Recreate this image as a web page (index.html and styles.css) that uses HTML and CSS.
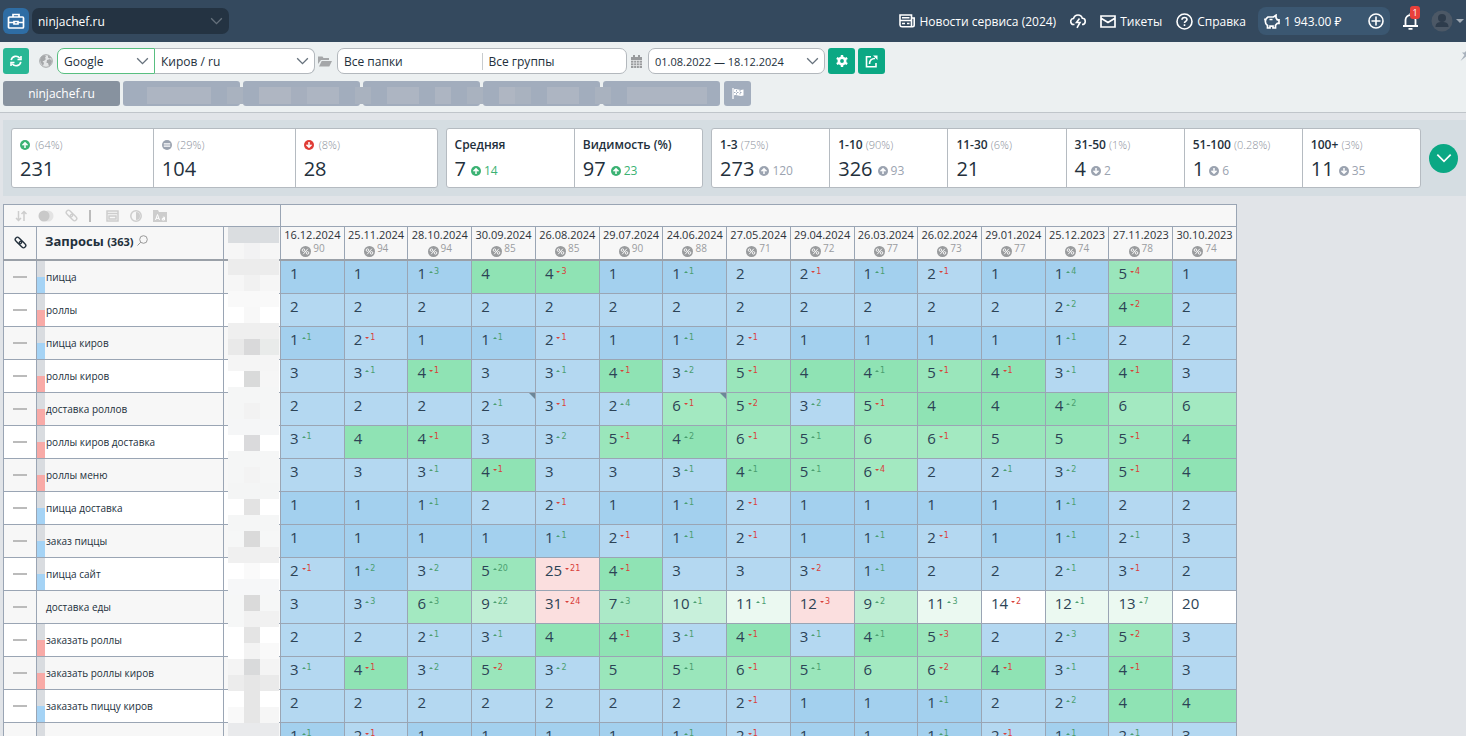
FILE: index.html
```
<!DOCTYPE html>
<html lang="ru">
  <head>
    <meta charset="UTF-8" />
    <meta name="viewport" content="width=device-width, initial-scale=1.0" />
    <title>ninjachef.ru</title>

    <link rel="stylesheet" href="styles.css">
  </head>

  <body>
    <svg class="sprite" aria-hidden="true">
      <symbol id="chevron" viewBox="0 0 14 9">
        <path d="M1 1.5l6 6 6-6" fill="none" stroke="currentColor" stroke-width="1.5" />
      </symbol>
      <symbol id="up" viewBox="0 0 10 10">
        <circle cx="5" cy="5" r="5" fill="currentColor" />
        <path d="M5 8V3M2.5 5.2L5 2.700l2.500 2.500" fill="none" stroke="#fff" stroke-width="1.500" />
      </symbol>
      <symbol id="down" viewBox="0 0 10 10">
        <circle cx="5" cy="5" r="5" fill="currentColor" />
        <path d="M5 2v5M2.500 4.800L5 7.300l2.500-2.500" fill="none" stroke="#fff" stroke-width="1.500" />
      </symbol>
      <symbol id="same" viewBox="0 0 10 10">
        <circle cx="5" cy="5" r="5" fill="currentColor" />
        <path d="M1.800 3.800h6.400M1.800 6.200h6.400" stroke="#fff" stroke-width="1.200" />
      </symbol>
      <symbol id="percent" viewBox="0 0 12 12">
        <circle cx="6" cy="6" r="6" fill="#999b9d" />
        <path d="M3.500 9L8.500 3" stroke="#fff" />
        <circle cx="3.800" cy="4.500" r="1.400" fill="none" stroke="#fff" />
        <circle cx="8.200" cy="7.500" r="1.400" fill="none" stroke="#fff" />
      </symbol>
      <symbol id="link" viewBox="0 0 14 14">
        <g fill="none" stroke="currentColor" stroke-width="1.500" transform="rotate(45 7 7)">
          <rect x="0" y="4.600" width="8" height="4.800" rx="2.400" />
          <rect x="6" y="4.600" width="8" height="4.800" rx="2.400" />
        </g>
      </symbol>
    </svg>

    <header class="header">
      <button class="logo" type="button" aria-label="Проекты">
        <svg width="18" height="18" viewBox="0 0 18 18" fill="none" stroke="#fff" stroke-width="1.700">
          <path d="M6 5V2.500h6V5M2.500 5h13a1 1 0 0 1 1 1v9a1 1 0 0 1-1 1h-13a1 1 0 0 1-1-1V6a1 1 0 0 1 1-1zM1.500 10.500h5.300M11.200 10.500h5.300M7 9.500h4v2.500H7z" />
        </svg>
      </button>
      <div class="select project">
        <select aria-label="Проект"><option>ninjachef.ru</option></select>
        <svg><use href="#chevron" /></svg>
      </div>
      <nav class="nav">
        <a class="news" href="#">
          <svg width="16" height="14" viewBox="0 0 16 14" fill="none" stroke="#fff" stroke-width="1.600">
            <path d="M3 12.800h10.500a1.700 1.700 0 0 0 1.700-1.700V4H12M12.500 12.500V1H1v10a2 2 0 0 0 2 1.800M3 3.800h7.500M1 6.500h11.500M3 9.500h3M8 9.500h2.500" />
          </svg>
          Новости сервиса (2024)
        </a>
        <a class="cloud" href="#" aria-label="Обновления">
          <svg width="16" height="15" viewBox="0 0 16 15" fill="none" stroke="#fff" stroke-width="1.600">
            <path d="M4.500 10.500H4a3 3 0 0 1-.5-6C4.300 2 6 1 8 1c2.200 0 3.800 1.300 4.300 3.300 4 .2 3.900 6.200-.3 6.200M9.500 4.500L6.500 8.500h3.500L7 13.800" />
          </svg>
        </a>
        <a class="tickets" href="#">
          <svg width="16" height="13" viewBox="0 0 16 13" fill="none" stroke="#fff" stroke-width="1.700">
            <path d="M1 1h14v11H1zM1.500 3.500L8 7.500l6.500-4" />
          </svg>
          Тикеты
        </a>
        <a class="help" href="#">
          <svg width="17" height="17" viewBox="0 0 17 17" fill="none" stroke="#fff" stroke-width="1.600">
            <circle cx="8.500" cy="8.500" r="7.500" />
            <path d="M6 6.800C6 3.600 11 3.800 11 6.600c0 1.800-2.500 1.800-2.500 3.400M8.500 11.200v1.800" />
          </svg>
          Справка
        </a>
        <div class="balance">
          <svg width="16" height="15" viewBox="0 0 16 15" fill="none" stroke="#fff" stroke-width="1.700">
            <path d="M4 3h5.500L12 1.200v2.600l1.300 2H15v3.500h-1.700l-1.800 2V14H9v-1.800H6V14H3.500v-2.500C.6 9.500.5 5 4 3zM1 4.500v2M5.500 5.500h3" />
          </svg>
          <span>1 943.00 ₽</span>
          <button type="button" aria-label="Пополнить">
            <svg width="16" height="16" viewBox="0 0 16 16" fill="none" stroke="#fff" stroke-width="1.600">
              <circle cx="8" cy="8" r="7" />
              <path d="M8 3.500v9M3.500 8h9" />
            </svg>
          </button>
        </div>
        <button class="bell" type="button" aria-label="Уведомления">
          <svg width="17" height="18" viewBox="0 0 17 18" fill="none" stroke="#fff" stroke-width="1.800">
            <path d="M1 14h15M3.500 14V8c0-6.500 10-6.500 10 0v6M8.500 3V1M6.500 16.800h4" />
          </svg>
          <span class="badge">1</span>
        </button>
        <button class="user" type="button" aria-label="Профиль">
          <svg width="22" height="22" viewBox="0 0 22 22">
            <circle cx="11" cy="11" r="10.500" fill="#4c5866" />
            <circle cx="11" cy="8" r="4" fill="#2e3c4c" />
            <path d="M4.500 17c0-4 2.500-5 6.500-5s6.500 1 6.500 5z" fill="#2e3c4c" />
          </svg>
          <span class="caret"></span>
        </button>
      </nav>
    </header>

    <section class="filters">
      <div class="filter-row">
        <button class="btn refresh" type="button" aria-label="Обновить">
          <svg width="12" height="12" viewBox="0 0 12 12" fill="none" stroke="#fff" stroke-width="1.600">
            <path d="M1.200 5.200C2 .6 7.500.2 9.800 3.200M11 1v3.500H7.500M10.800 6.800C10 11.400 4.500 11.800 2.200 8.800M1 11V7.500h3.500" />
          </svg>
        </button>
        <svg class="globe" width="14" height="14" viewBox="0 0 14 14">
          <circle cx="7" cy="7" r="6.300" fill="#e3e5e6" stroke="#a5a7a9" />
          <path d="M2 3l3-2 2 1-1 2 1 1-2 2H3.500l1.500 2-1 3-2-3L1 6zM9 1l3.500 3-2 .5-1.500-1zM8 6l3-1 2 2-1 3-2 2.500L9 9H7.500z" fill="#a5a7a9" />
        </svg>
        <div class="select engine">
          <select aria-label="Поисковая система"><option>Google</option></select>
          <svg><use href="#chevron" /></svg>
        </div>
        <div class="select region">
          <select aria-label="Регион"><option>Киров / ru</option></select>
          <svg><use href="#chevron" /></svg>
        </div>
        <svg class="folder" width="14" height="12" viewBox="0 0 14 12" fill="#a5a7a9">
          <path d="M0 9V1.500h4.500l1 1.500H11v2H3zM1 11.500L3.700 6H14l-2.700 5.500z" />
        </svg>
        <div class="groups">
          <input type="text" aria-label="Папки" value="Все папки" />
          <input type="text" aria-label="Группы" value="Все группы" />
        </div>
        <svg class="calendar" width="11" height="13" viewBox="0 0 11 13">
          <path d="M0 2h11v11H0zM2 0h2v3H2zM7 0h2v3H7z" fill="#999b9d" />
          <path d="M0 5.500h11M0 8h11M0 10.500h11M2.700 5v8M5.500 5v8M8.300 5v8" stroke="#e4e6e7" stroke-width=".8" />
        </svg>
        <div class="select dates">
          <select aria-label="Период"><option>01.08.2022 — 18.12.2024</option></select>
          <svg><use href="#chevron" /></svg>
        </div>
        <button class="btn" type="button" aria-label="Настройки">
          <svg width="12" height="12" viewBox="0 0 12 12">
            <circle cx="6" cy="6" r="3.200" fill="none" stroke="#fff" stroke-width="2.600" />
            <path d="M6 0v2.500M6 9.500V12M.8 3l2.200 1.200M9 7.800L11.200 9M.8 9L3 7.800M9 4.200L11.200 3" stroke="#fff" stroke-width="2.400" />
          </svg>
        </button>
        <button class="btn" type="button" aria-label="Поделиться">
          <svg width="13" height="13" viewBox="0 0 13 13" fill="none" stroke="#fff" stroke-width="1.600">
            <path d="M6 1.800H1.500v10h9.500V8M4.500 9C4.500 5.500 6.500 3.500 10 3.500" />
            <path d="M8 .5h4.500V5z" fill="#fff" stroke="none" />
          </svg>
        </button>
        <svg class="pin" width="12" height="12" viewBox="0 0 12 12" fill="#a7b0bb">
          <path d="M7 0l5 5-1.500.5-2 2V10L6 7.500.5 12 4.500 6 2 3.500h2.500l2-2z" />
        </svg>
      </div>
      <div class="tabs">
        <button class="tab active" type="button">ninjachef.ru</button>
        <button class="tab" type="button" aria-label="Сайт 2"></button>
        <button class="tab" type="button" aria-label="Сайт 3"></button>
        <button class="tab" type="button" aria-label="Сайт 4"></button>
        <button class="tab" type="button" aria-label="Сайт 5"></button>
        <button class="tab" type="button" aria-label="Сайт 6"></button>
        <button class="tab flag" type="button" aria-label="Цели">
          <svg width="12" height="11" viewBox="0 0 12 11">
            <path d="M1 0v11" stroke="#fff" stroke-width="1.300" />
            <path d="M2 1.500c3-1.500 5 1.500 9.500 0v6c-4.500 1.500-6.500-1.500-9.500 0z" fill="#fff" />
            <path d="M4.500 2v6M8 2v6M2 4.500h9" stroke="#a2adbd" stroke-dasharray="1.500 1.500" />
          </svg>
        </button>
        <div class="tab-mask"></div>
      </div>
    </section>

    <section class="summary">
      <div class="cards trend">
        <div class="card">
          <p><svg class="green"><use href="#up" /></svg> <small>(64%)</small></p>
          <strong>231</strong>
        </div>
        <div class="card">
          <p><svg class="grey"><use href="#same" /></svg> <small>(29%)</small></p>
          <strong>104</strong>
        </div>
        <div class="card">
          <p><svg class="red"><use href="#down" /></svg> <small>(8%)</small></p>
          <strong>28</strong>
        </div>
      </div>
      <div class="cards average">
        <div class="card">
          <p>Средняя</p>
          <strong>7</strong><span class="diff green"><svg><use href="#up" /></svg>14</span>
        </div>
        <div class="card">
          <p>Видимость (%)</p>
          <strong>97</strong><span class="diff green"><svg><use href="#up" /></svg>23</span>
        </div>
      </div>
      <div class="cards tops">
        <div class="card">
          <p>1-3 <small>(75%)</small></p>
          <strong>273</strong><span class="diff grey"><svg><use href="#up" /></svg>120</span>
        </div>
        <div class="card">
          <p>1-10 <small>(90%)</small></p>
          <strong>326</strong><span class="diff grey"><svg><use href="#up" /></svg>93</span>
        </div>
        <div class="card">
          <p>11-30 <small>(6%)</small></p>
          <strong>21</strong>
        </div>
        <div class="card">
          <p>31-50 <small>(1%)</small></p>
          <strong>4</strong><span class="diff grey"><svg><use href="#down" /></svg>2</span>
        </div>
        <div class="card">
          <p>51-100 <small>(0.28%)</small></p>
          <strong>1</strong><span class="diff grey"><svg><use href="#down" /></svg>6</span>
        </div>
        <div class="card">
          <p>100+ <small>(3%)</small></p>
          <strong>11</strong><span class="diff grey"><svg><use href="#down" /></svg>35</span>
        </div>
      </div>
      <button class="expand" type="button" aria-label="Развернуть">
        <svg width="16" height="10"><use href="#chevron" /></svg>
      </button>
    </section>

    <main class="report">
      <table class="positions">
        <colgroup>
          <col class="col-link" />
          <col class="col-query" />
          <col class="col-hidden" />
          <col span="15" />
        </colgroup>
        <thead>
          <tr class="tools">
            <th colspan="3">
              <div class="tool-icons">
                <svg width="12" height="12" viewBox="0 0 12 12" fill="none" stroke="currentColor" stroke-width="1.500">
                  <path d="M3.500 1v9M1 8l2.500 2.500L6 8M9 11V2M6.500 4L9 1.500 11.500 4" />
                </svg>
                <svg width="16" height="12" viewBox="0 0 16 12">
                  <circle cx="10" cy="6" r="5.500" fill="#e3e3e3" />
                  <circle cx="6" cy="6" r="5.500" fill="#c9c9c9" />
                </svg>
                <svg width="13" height="13"><use href="#link" /></svg>
                <svg width="2" height="12"><path d="M1 0v12" stroke="#bbb" stroke-width="2" /></svg>
                <svg class="tool-window" width="13" height="12" viewBox="0 0 13 12" fill="none" stroke="currentColor" stroke-width="1.500">
                  <path d="M1 1h11v10H1zM1 3.500h11M3 6h7v3H3z" />
                </svg>
                <svg width="12" height="12" viewBox="0 0 12 12">
                  <circle cx="6" cy="6" r="5.200" fill="none" stroke="currentColor" stroke-width="1.500" />
                  <path d="M6 2a4 4 0 0 1 0 8z" fill="currentColor" />
                </svg>
                <svg width="14" height="12" viewBox="0 0 14 12">
                  <path d="M0 0h5l1 2h8v10H0z" fill="currentColor" />
                  <path d="M2.500 10L4.500 4.500 6.500 10M3 8.300h3M9.800 7.200h1.700V10H9.300V8.500h2" fill="none" stroke="#fff" />
                </svg>
              </div>
            </th>
            <th colspan="15"></th>
          </tr>
          <tr class="heads" id="heads">
            <th><svg class="head-link" width="13" height="13"><use href="#link" /></svg></th>
            <th class="queries">
              Запросы <span>(363)</span>
              <svg width="11" height="11" viewBox="0 0 11 11" fill="none" stroke="#999">
                <circle cx="6.500" cy="4.500" r="3.800" />
                <path d="M3.800 7.200L.5 10.500" />
              </svg>
            </th>
            <th class="hidden-col"><div class="mask" id="mask"></div></th>
          </tr>
        </thead>
        <tbody id="rows"></tbody>
      </table>
    </main>

    <script src="script.js"></script>
  </body>
</html>
```
FILE: styles.css
```
* {
  box-sizing: border-box;
}

body {
  font-family: "Open Sans", "Noto Sans", sans-serif;
  font-size: 12px;
  margin: 0;
  height: 100vh;
  display: flex;
  flex-direction: column;
  overflow: hidden;
  background-color: #e1e4e8;
  color: #23303c;
}

button,
select,
input {
  font: inherit;
  color: inherit;
}

button {
  display: flex;
  align-items: center;
  justify-content: center;
  padding: 0;
  border: none;
  background: none;
  cursor: pointer;
}

svg {
  flex: none;
}

.sprite {
  position: absolute;
  width: 0;
  height: 0;
}

/* header */
.header {
  display: flex;
  align-items: center;
  flex: none;
  height: 42px;
  padding-left: 3px;
  background-color: #34495e;
  color: #fff;
}

.logo {
  width: 26px;
  height: 26px;
  margin-right: 3px;
  border-radius: 6px;
  background-color: #2e6da4;
}

.select {
  position: relative;
  height: 26px;
}

.select select {
  width: 100%;
  height: 100%;
  padding: 0 30px 0 6px;
  appearance: none;
  border: 1px solid #b3b8bd;
  border-radius: 7px;
  background-color: #fff;
}

.select svg {
  position: absolute;
  top: 9px;
  right: 6px;
  width: 13px;
  height: 8px;
  color: #66717c;
  pointer-events: none;
}

.project {
  width: 197px;
}

.project select {
  border: none;
  background-color: #243342;
  color: #fff;
}

.nav {
  display: flex;
  align-items: center;
  margin-left: auto;
  padding-right: 2px;
  white-space: nowrap;
}

.nav a {
  display: flex;
  align-items: center;
  gap: 4px;
  margin-right: 14px;
  color: #fff;
  text-decoration: none;
}

.nav .help {
  margin-right: 12px;
}

.balance {
  display: flex;
  align-items: center;
  gap: 4px;
  width: 132px;
  height: 28px;
  padding: 0 6px;
  border-radius: 8px;
  background-color: #3b5771;
}

.balance button {
  margin-left: auto;
}

.bell {
  position: relative;
  margin-left: 12px;
}

.badge {
  position: absolute;
  top: -6px;
  right: -1px;
  width: 10px;
  border-radius: 3px;
  background-color: #e8403a;
  color: #fff;
  font-size: 9px;
  line-height: 13px;
}

.user {
  margin-left: 12px;
  gap: 3px;
}

.caret {
  border: 4px solid transparent;
  border-top-color: #a0aab4;
  border-bottom: none;
}

/* filters */
.filters {
  flex: none;
  padding: 6px 0 6px 3px;
  border-bottom: 1px solid #c0c5ca;
  background-color: #ecf0f1;
}

.filter-row {
  display: flex;
  align-items: center;
  height: 26px;
  margin-bottom: 7px;
}

.btn {
  width: 27px;
  height: 26px;
  margin-left: 3px;
  border-radius: 3px;
  background-color: #0ba884;
}

.refresh {
  width: 26px;
  margin-left: 0;
  background-color: #29b795;
}

.globe {
  margin: 0 4px 0 10px;
}

.engine {
  width: 98px;
}

.engine select {
  border-color: #58bf80;
  border-radius: 7px 0 0 7px;
}

.region {
  width: 160px;
}

.region select {
  border-left: none;
  border-radius: 0 7px 7px 0;
}

.folder {
  margin: 0 5px 0 3px;
}

.groups {
  display: flex;
  align-items: center;
  width: 290px;
  height: 26px;
  border: 1px solid #b3b8bd;
  border-radius: 7px;
  background-color: #fff;
}

.groups input {
  flex: 1;
  min-width: 0;
  padding: 0 6px;
  border: none;
  background: none;
}

.groups input + input {
  border-left: 1px solid #c8cccf;
}

.calendar {
  margin: 0 6px 0 4px;
}

.dates {
  width: 177px;
}

.dates select {
  font-size: 11px;
}

.pin {
  align-self: flex-start;
  margin: 1px -6px 0 auto;
}

.tabs {
  position: relative;
  display: flex;
  gap: 3px;
}

.tab {
  width: 117px;
  height: 25px;
  border-radius: 3px;
  background-color: #a2adbd;
}

.tab.active {
  background-color: #87929f;
  color: #fff;
}

.tab.flag {
  width: 27px;
  margin-left: 1px;
}

.tab-mask {
  position: absolute;
  left: 144px;
  top: 6px;
  width: 560px;
  height: 17px;
  background: linear-gradient(
    90deg,
    #adb5c2 0 64px, transparent 64px 80px, #a9b2bf 80px 96px, transparent 96px 112px,
    #afb6c2 112px 144px, #a6afbe 144px 160px, #adb5c2 160px 192px, transparent 192px 208px,
    #a9b2bf 208px 224px, transparent 224px 240px, #adb5c2 240px 272px, transparent 272px 288px,
    #adb5c2 288px 304px, transparent 304px 320px, #a9b2bf 320px 336px, transparent 336px 352px,
    #afb6c2 352px 368px, #a9b2bf 368px 384px, transparent 384px 400px, #adb5c2 400px 432px,
    transparent 432px 448px, #a9b2bf 448px 464px, transparent 464px 480px, #adb5c2 480px 560px
  );
}

/* summary */
.summary {
  display: flex;
  align-items: center;
  flex: none;
  gap: 8px;
  margin: 7px 0 8px 3px;
  padding: 8px;
  background-color: #d5dde2;
}

.cards {
  display: flex;
  height: 60px;
  border: 1px solid #b5bbc1;
  border-radius: 3px;
  background-color: #fff;
}

.trend {
  flex: 427;
}

.average {
  flex: 257;
}

.tops {
  flex: 712;
}

.card {
  flex: 1;
  min-width: 0;
  padding: 7px 8px;
  white-space: nowrap;
}

.card + .card {
  border-left: 1px solid #b5bbc1;
}

.card p {
  margin: 0 0 2px;
  font-weight: 600;
  font-size: 12px;
  line-height: 18px;
}

.card svg {
  width: 10px;
  height: 10px;
  vertical-align: -1px;
}

.card p svg {
  margin-right: 2px;
}

.card small {
  color: #8b919b;
  font-weight: 300;
  font-size: 11px;
}

.card strong {
  font-weight: 500;
  font-size: 20px;
  line-height: 26px;
}

.diff {
  margin-left: 5px;
  font-size: 12px;
  vertical-align: 1px;
}

.diff svg {
  margin-right: 3px;
}

.green {
  color: #3bb273;
}

.grey {
  color: #9ba3b0;
}

.red {
  color: #e03c35;
}

.expand {
  flex: none;
  width: 29px;
  height: 29px;
  border-radius: 50%;
  background-color: #0ba884;
  color: #fff;
}

/* report */
.report {
  flex: 1;
  min-height: 0;
  padding-left: 3px;
  overflow: hidden;
}

.positions {
  width: 1234px;
  table-layout: fixed;
  border-collapse: collapse;
}

.col-link {
  width: 33px;
}

.col-query {
  width: 187px;
}

.col-hidden {
  width: 57px;
}

.positions th,
.positions td {
  padding: 0;
  border: 1px solid #9aa5b4;
  font-weight: 400;
}

.positions th {
  background-color: #f7f7f7;
}

.tools th {
  height: 22px;
}

.tool-icons {
  display: flex;
  align-items: center;
  gap: 11px;
  padding-left: 11px;
  color: #cdcdcd;
}

.tool-window {
  margin-left: 4px;
}

.positions .heads th {
  height: 33px;
  border-bottom: 2px solid #9aa0a8;
}

.head-link {
  display: block;
  margin: 0 auto;
}

.positions .queries {
  padding: 0 0 3px 8px;
  text-align: left;
  font-weight: 700;
  font-size: 13px;
}

.queries span {
  font-size: 11px;
}

.positions .date {
  font-size: 11px;
  line-height: 15px;
  vertical-align: top;
  white-space: nowrap;
  color: #2d3237;
}

.date div {
  display: flex;
  justify-content: center;
  gap: 2px;
  color: #9a9c9f;
  font-size: 10px;
  line-height: 12px;
}

.date svg {
  width: 11px;
  height: 11px;
  margin-top: 4px;
}

.positions tbody tr {
  height: 33px;
}

.positions tbody tr:nth-child(odd) {
  background-color: #f7f7f7;
}

.positions tbody tr:nth-child(even) {
  background-color: #fff;
}

.dash {
  width: 14px;
  height: 2px;
  margin: 0 auto;
  background-color: #bbb;
}

.query {
  display: flex;
  align-items: center;
  height: 32px;
  font-size: 10px;
  white-space: nowrap;
}

.mark {
  width: 8px;
  height: 32px;
  margin-right: 1px;
}

.mark.blue {
  background: linear-gradient(#d9dce0 50%, #a5d3f5 50%);
}

.mark.pink {
  background: linear-gradient(#d9dce0 50%, #f8aaa7 50%);
}

.hidden-col {
  position: relative;
}

.mask {
  position: absolute;
  top: 0;
  left: 4px;
  z-index: 1;
  display: grid;
  grid-template-columns: 16px 16px 19px;
  grid-auto-rows: 16px;
}

.positions .pos {
  position: relative;
  padding: 2px 0 0 9px;
  vertical-align: top;
  font-size: 15px;
  line-height: 20px;
  color: #2c4356;
}

.top1 {
  background-color: #a3d0ee;
}

.top3 {
  background-color: #b4d8f1;
}

.top4 {
  background-color: #8fe3b4;
}

.top5 {
  background-color: #9ae6bb;
}

.top6 {
  background-color: #a3e9c1;
}

.top7 {
  background-color: #abe9c7;
}

.top9 {
  background-color: #bfeed4;
}

.top10 {
  background-color: #c8f0db;
}

.top13 {
  background-color: #ebf9f1;
}

.low {
  background-color: #fff;
}

.drop {
  background-color: #fbdfdf;
}

.better,
.worse {
  display: inline-flex;
  align-items: center;
  gap: 1px;
  margin-left: 3px;
  height: 10px;
  font-family: "DejaVu Sans", sans-serif;
  font-size: 8px;
  line-height: 10px;
  vertical-align: 6px;
}

.better {
  color: #4a9e70;
}

.worse {
  color: #d9403a;
}

.better::before,
.worse::before {
  content: "";
  border: 2px solid transparent;
}

.better::before {
  border-top: none;
  border-bottom-color: currentColor;
}

.worse::before {
  border-bottom: none;
  border-top-color: currentColor;
}

.note::after {
  content: "";
  position: absolute;
  top: 0;
  right: 0;
  border-top: 6px solid #6c8698;
  border-left: 6px solid transparent;
}
```
FILE: script.js
```
const dates = [
  ["16.12.2024", 90], ["25.11.2024", 94], ["28.10.2024", 94], ["30.09.2024", 85],
  ["26.08.2024", 85], ["29.07.2024", 90], ["24.06.2024", 88], ["27.05.2024", 71],
  ["29.04.2024", 72], ["26.03.2024", 77], ["26.02.2024", 73], ["29.01.2024", 77],
  ["25.12.2023", 74], ["27.11.2023", 78], ["30.10.2023", 74],
];

// position, then the change: "-" moved up, "+" moved down, "*" has a note
const queries = [
  ["пицца", "blue", "1 1 1-3 4 4+3 1 1-1 2 2+1 1-1 2+1 1 1-4 5+4 1"],
  ["роллы", "pink", "2 2 2 2 2 2 2 2 2 2 2 2 2-2 4+2 2"],
  ["пицца киров", "blue", "1-1 2+1 1 1-1 2+1 1 1-1 2+1 1 1 1 1 1-1 2 2"],
  ["роллы киров", "pink", "3 3-1 4+1 3 3-1 4+1 3-2 5+1 4 4-1 5+1 4+1 3-1 4+1 3"],
  ["доставка роллов", "pink", "2 2 2 2-1* 3+1 2-4 6+1* 5+2 3-2 5+1 4 4 4-2 6 6"],
  ["роллы киров доставка", "pink", "3-1 4 4+1 3 3-2 5+1 4-2 6+1 5-1 6 6+1 5 5 5+1 4"],
  ["роллы меню", "pink", "3 3 3-1 4+1 3 3 3-1 4-1 5-1 6+4 2 2-1 3-2 5+1 4"],
  ["пицца доставка", "blue", "1 1 1-1 2 2+1 1 1-1 2+1 1 1 1 1 1-1 2 2"],
  ["заказ пиццы", "blue", "1 1 1 1 1-1 2+1 1-1 2+1 1 1-1 2+1 1 1-1 2-1 3"],
  ["пицца сайт", "blue", "2+1 1-2 3-2 5-20 25+21 4+1 3 3 3+2 1-1 2 2 2-1 3+1 2"],
  ["доставка еды", "", "3 3-3 6-3 9-22 31+24 7-3 10-1 11-1 12+3 9-2 11-3 14+2 12-1 13-7 20"],
  ["заказать роллы", "pink", "2 2 2-1 3-1 4 4+1 3-1 4+1 3-1 4-1 5+3 2 2-3 5+2 3"],
  ["заказать роллы киров", "pink", "3-1 4+1 3-2 5+2 3-2 5 5-1 6+1 5-1 6 6+2 4+1 3-1 4+1 3"],
  ["заказать пиццу киров", "blue", "2 2 2 2 2 2 2 2+1 1 1 1-1 2 2-2 4 4"],
  ["доставка пиццы киров", "blue", "1-1 2+1 1 1 1 1 1-1 2+1 1 1 1-1 2+1 1-1 2-1 3"],
];

// shades of the hidden column, three blocks a line
const shades = [
  "dadde0 dadde0 dadde0", "f6f6f6 f2f2f3 f6f6f6", "ececec ececec ececec", "f6f6f6 f1f1f1 f6f6f6",
  "f9f9f9 f9f9f9 f9f9f9", "ffffff f8f8f8 ffffff", "efefef efefef efefef", "e9e9e9 d9d9da e9ebea",
  "f5f5f5 f5f5f5 f5f5f5", "ffffff d9dada f6f6f6", "f5f6f6 f5f6f6 f5f6f6", "f5f6f6 f2f2f2 f5f6f6",
  "f5f6f7 f5f6f7 f5f6f7", "ffffff dadadc ffffff", "f5f6f6 f5f6f6 f5f6f6", "f5f6f6 f3f3f3 f5f6f6",
  "f4f5f5 f4f5f5 f4f5f5", "ffffff e3e3e3 ffffff", "f5f6f6 f5f6f6 f5f6f6", "f6f7f7 dadada f6f7f7",
  "f0f0f0 f0f0f0 f0f0f0", "ffffff fafafa ffffff", "f6f7f8 f6f7f8 f6f7f8", "f6f7f7 dadada f6f7f7",
  "f6f7f7 f1f1f1 f1f1f1", "ffffff e4e4e4 ffffff", "ffffff f3f3f3 f9f9f9", "f4f4f4 d9dadb f4f4f4",
  "ececec e6e6e6 eaeaea", "ffffff e6e6e6 ffffff", "f9f9f9 e6e6e6 f6f6f6", "e9eaec e9eaec e9eaec",
];

function cellClass(place, change) {
  if (place > 20 || (place > 10 && change >= 3)) return "drop";
  if (place === 1) return "top1";
  if (place <= 3) return "top3";
  if (place <= 10) return "top" + place;
  if (place <= 13) return "top13";
  return "low";
}

function cell(text) {
  const [, place, change] = text.match(/^(\d+)([+-]\d+)?/);
  const note = text.endsWith("*") ? " note" : "";
  let html = place;
  if (change) {
    html += `<span class="${change > 0 ? "worse" : "better"}">${Math.abs(change)}</span>`;
  }
  return `<td class="pos ${cellClass(Number(place), Number(change || 0))}${note}">${html}</td>`;
}

document.getElementById("heads").insertAdjacentHTML(
  "beforeend",
  dates.map(([date, visibility]) => `
    <th class="date">${date}<div><svg><use href="#percent" /></svg>${visibility}</div></th>
  `).join("")
);

document.getElementById("rows").innerHTML = queries.map(([name, mark, places]) => `
  <tr>
    <td><div class="dash"></div></td>
    <td><div class="query"><span class="mark ${mark}"></span>${name}</div></td>
    <td></td>
    ${places.split(" ").map(cell).join("")}
  </tr>
`).join("");

document.getElementById("mask").innerHTML = shades.join(" ").split(" ")
  .map((shade) => `<i style="background-color: #${shade}"></i>`)
  .join("");
```
